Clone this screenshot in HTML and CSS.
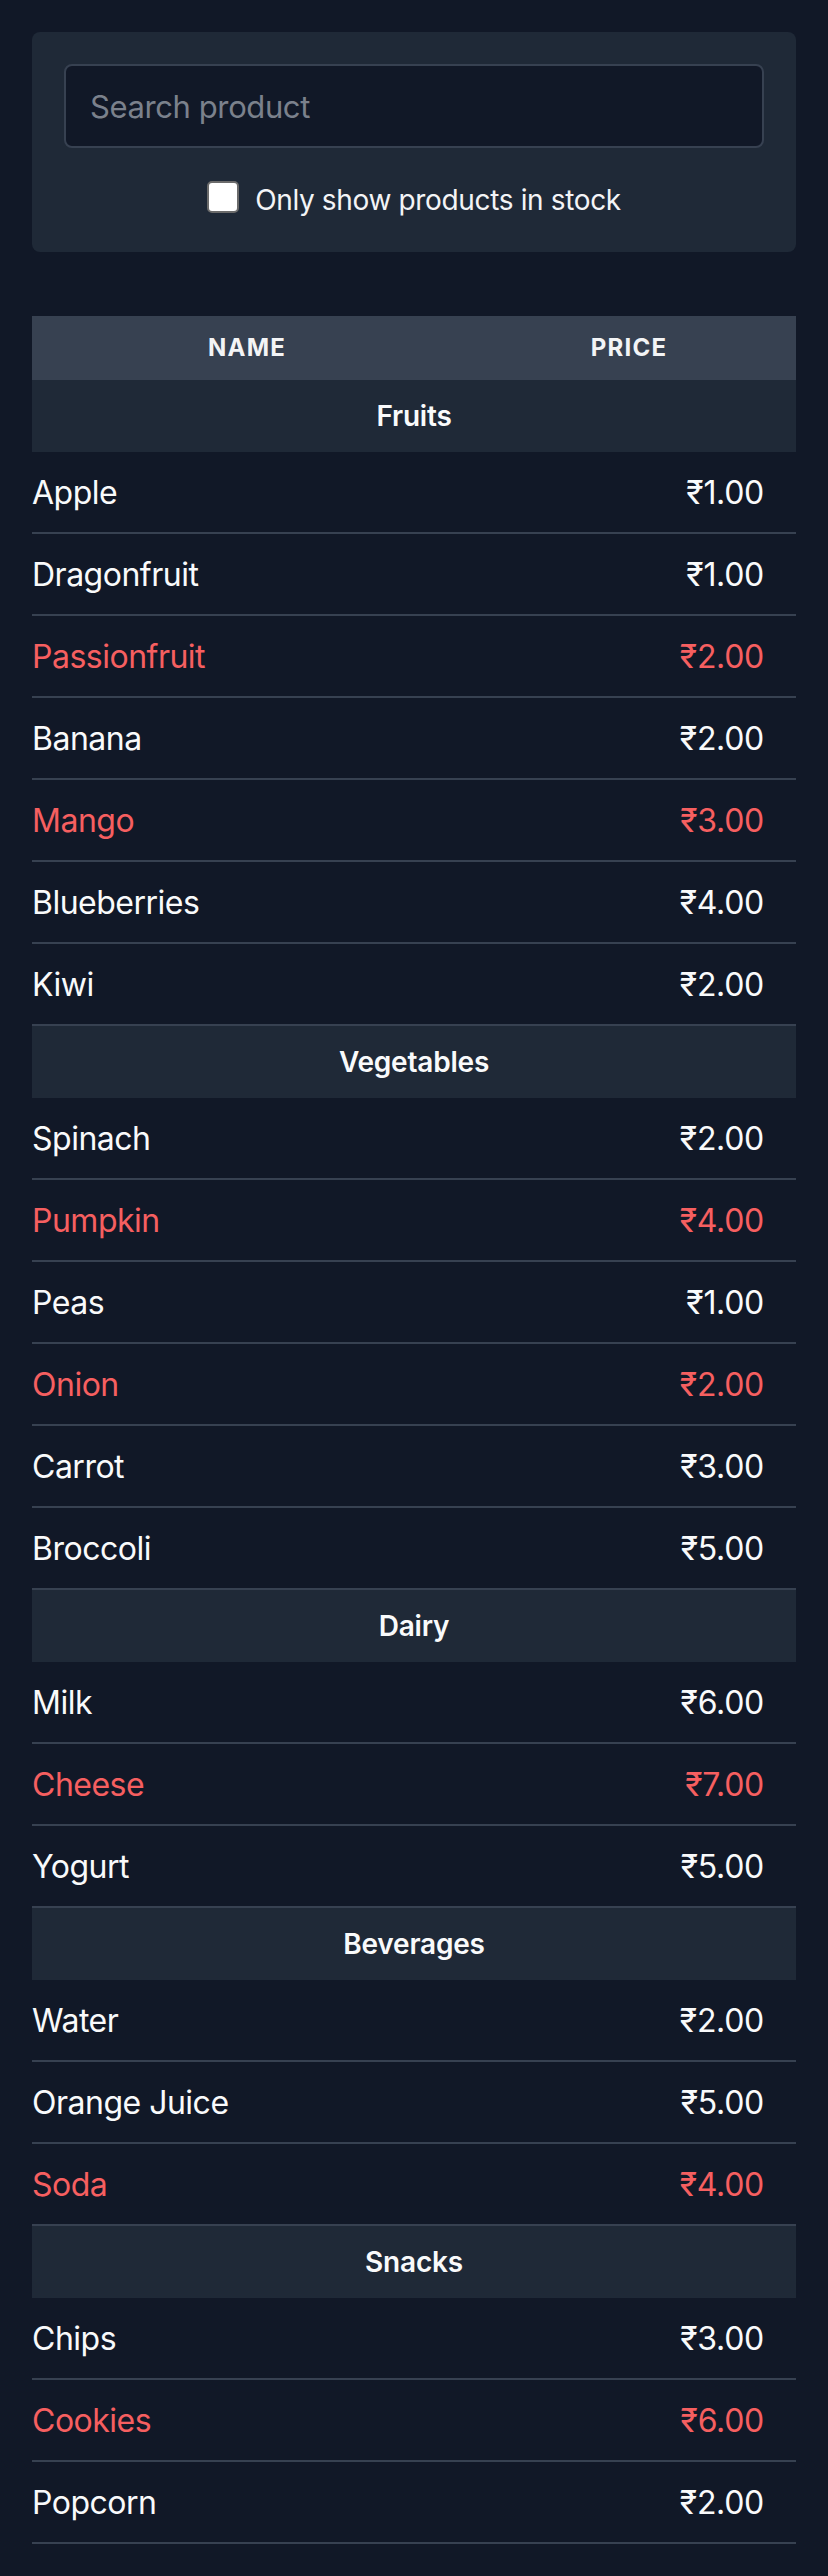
FILE: index.html
```html
<!DOCTYPE html>
<html lang="en">
<head>
<meta charset="utf-8">
<title>Products</title>
<link rel="stylesheet" href="styles.css">
</head>
<body>
<main class="page">
  <section class="filter-card">
    <input class="search" type="text" placeholder="Search product">
    <label class="stock-toggle">
      <span class="box"></span>
      <span class="stock-label">Only show products in stock</span>
    </label>
  </section>

  <table class="products">
    <colgroup><col class="col-name"><col class="col-price"></colgroup>
    <thead>
      <tr><th>Name</th><th>Price</th></tr>
    </thead>
    <tbody>
      <tr class="cat"><td colspan="2">Fruits</td></tr>
      <tr><td class="name">Apple</td><td class="price">₹1.00</td></tr>
      <tr><td class="name">Dragonfruit</td><td class="price">₹1.00</td></tr>
      <tr class="out"><td class="name">Passionfruit</td><td class="price">₹2.00</td></tr>
      <tr><td class="name">Banana</td><td class="price">₹2.00</td></tr>
      <tr class="out"><td class="name">Mango</td><td class="price">₹3.00</td></tr>
      <tr><td class="name">Blueberries</td><td class="price">₹4.00</td></tr>
      <tr><td class="name">Kiwi</td><td class="price">₹2.00</td></tr>

      <tr class="cat"><td colspan="2">Vegetables</td></tr>
      <tr><td class="name">Spinach</td><td class="price">₹2.00</td></tr>
      <tr class="out"><td class="name">Pumpkin</td><td class="price">₹4.00</td></tr>
      <tr><td class="name">Peas</td><td class="price">₹1.00</td></tr>
      <tr class="out"><td class="name">Onion</td><td class="price">₹2.00</td></tr>
      <tr><td class="name">Carrot</td><td class="price">₹3.00</td></tr>
      <tr><td class="name">Broccoli</td><td class="price">₹5.00</td></tr>

      <tr class="cat"><td colspan="2">Dairy</td></tr>
      <tr><td class="name">Milk</td><td class="price">₹6.00</td></tr>
      <tr class="out"><td class="name">Cheese</td><td class="price">₹7.00</td></tr>
      <tr><td class="name">Yogurt</td><td class="price">₹5.00</td></tr>

      <tr class="cat"><td colspan="2">Beverages</td></tr>
      <tr><td class="name">Water</td><td class="price">₹2.00</td></tr>
      <tr><td class="name">Orange Juice</td><td class="price">₹5.00</td></tr>
      <tr class="out"><td class="name">Soda</td><td class="price">₹4.00</td></tr>

      <tr class="cat"><td colspan="2">Snacks</td></tr>
      <tr><td class="name">Chips</td><td class="price">₹3.00</td></tr>
      <tr class="out"><td class="name">Cookies</td><td class="price">₹6.00</td></tr>
      <tr><td class="name">Popcorn</td><td class="price">₹2.00</td></tr>
    </tbody>
  </table>
</main>
</body>
</html>
```

FILE: styles.css
```css
html, body {
  margin: 0;
  padding: 0;
  background: #111827;
}

body {
  font-family: Inter, "Noto Sans", "Liberation Sans", sans-serif;
  color: #f9fafb;
}

.page {
  padding: 32px;
  display: flex;
  flex-direction: column;
  gap: 64px;
}

.filter-card {
  background: #1f2937;
  border-radius: 8px;
  padding: 32px;
  display: flex;
  flex-direction: column;
  align-items: center;
  gap: 32px;
}

.search {
  box-sizing: border-box;
  width: 100%;
  height: 84px;
  margin: 0;
  padding: 16px 24px;
  font-family: inherit;
  font-size: 31px;
  line-height: 48px;
  letter-spacing: -0.4px;
  color: #f9fafb;
  background: #111827;
  border: 2px solid #374151;
  border-radius: 8px;
  outline: none;
}

.search::placeholder {
  color: #7b818c;
}

.stock-toggle {
  display: flex;
  align-items: flex-start;
  gap: 16px;
  height: 40px;
}

.box {
  box-sizing: border-box;
  width: 32px;
  height: 32px;
  background: #ffffff;
  border: 2px solid #6b6b6b;
  border-radius: 5px;
  margin-top: 1px;
}

.stock-label {
  font-size: 28px;
  line-height: 40px;
  letter-spacing: -0.35px;
  color: #f3f4f6;
}

.products {
  width: 764px;
  border-collapse: collapse;
  table-layout: fixed;
}

.col-name { width: 430px; }
.col-price { width: 334px; }

.products th {
  background: #374151;
  padding: 16px 0;
  font-size: 24px;
  line-height: 32px;
  font-weight: 700;
  letter-spacing: 1.2px;
  text-transform: uppercase;
  text-align: center;
  color: #f3f4f6;
}

.products td {
  padding: 17px 0 15px;
  font-size: 32px;
  line-height: 48px;
  letter-spacing: -0.5px;
  color: #f9fafb;
  border-bottom: 2px solid #374151;
}

.products td.price {
  text-align: right;
  padding-right: 32px;
  letter-spacing: -0.3px;
}

.products tr.out td {
  color: #f65f60;
}

.products tr.cat td {
  background: #1f2937;
  border-bottom: none;
  padding: 16px 0;
  text-align: center;
  font-size: 28px;
  line-height: 40px;
  letter-spacing: -0.2px;
  font-weight: 600;
}
```
